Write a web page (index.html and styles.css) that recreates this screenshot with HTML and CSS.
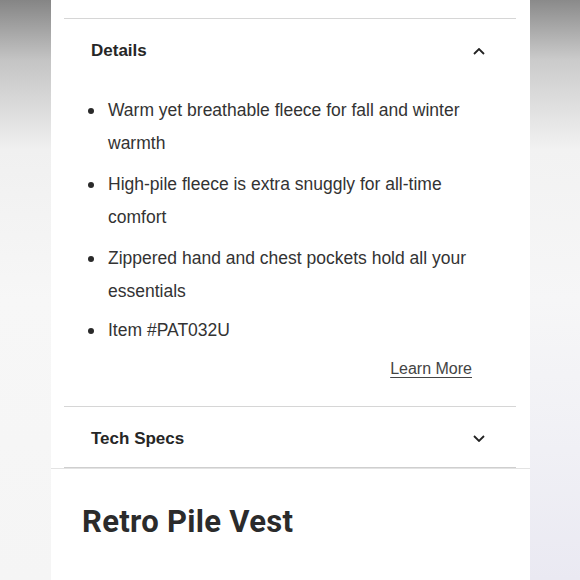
FILE: index.html
```html
<!DOCTYPE html>
<html lang="en">
<head>
<meta charset="utf-8">
<title>Retro Pile Vest</title>
<link rel="stylesheet" href="styles.css">
</head>
<body>
<div class="frame">
  <div class="side side-left"></div>
  <main class="panel">
    <div class="acc-wrap">
      <section class="accordion">
        <div class="acc-item">
          <div class="acc-head">
            <h2 class="acc-title">Details</h2>
            <svg class="chev" width="12" height="7" viewBox="0 0 12 7"><polyline points="1,6 6,1 11,6" fill="none" stroke="#222" stroke-width="1.8"/></svg>
          </div>
          <div class="acc-body">
            <ul class="bullets">
              <li>Warm yet breathable fleece for fall and winter warmth</li>
              <li>High-pile fleece is extra snuggly for all-time comfort</li>
              <li>Zippered hand and chest pockets hold all your essentials</li>
              <li class="last">Item #PAT032U</li>
            </ul>
            <div class="more"><a href="#" class="more-link">Learn More</a></div>
          </div>
        </div>
        <div class="acc-item">
          <div class="acc-head acc-head-closed">
            <h2 class="acc-title">Tech Specs</h2>
            <svg class="chev" width="12" height="7" viewBox="0 0 12 7"><polyline points="1,1 6,6 11,1" fill="none" stroke="#222" stroke-width="1.8"/></svg>
          </div>
        </div>
      </section>
    </div>
    <h1 class="title">Retro Pile Vest</h1>
  </main>
  <div class="side side-right"></div>
</div>
</body>
</html>
```

FILE: styles.css
```css
html, body {
  margin: 0;
  padding: 0;
}
body {
  width: 580px;
  height: 580px;
  overflow: hidden;
  font-family: "Liberation Sans", Arial, sans-serif;
  color: #2e2e2e;
}
.frame {
  display: flex;
  height: 580px;
}
.side {
  flex: none;
}
.side-left {
  width: 51px;
  background: linear-gradient(to bottom, #858585 0px, #c4c4c4 60px, #f0f0f0 150px, #f7f7f7 300px, #f5f5f5 580px);
}
.side-right {
  width: 50px;
  background: linear-gradient(to bottom, #8a8a8a 0px, #cbcbcb 60px, #f2f2f2 150px, #f6f6f7 300px, #f0f0f5 450px, #eae9f2 580px);
}
.panel {
  flex: none;
  width: 479px;
  background: #fff;
  padding-top: 18px;
  box-sizing: border-box;
}
.acc-wrap {
  padding: 0 5px 0 4px;
  border-bottom: 1px solid #e3e3e3;
}
.accordion {
  margin: 0 9px;
  border-bottom: 1px solid #cfcfcf;
}
.acc-item {
  border-top: 1px solid #d6d6d6;
}
.acc-head {
  height: 63px;
  box-sizing: border-box;
  padding: 1px 31px 0 27px;
  display: flex;
  align-items: center;
  justify-content: space-between;
}
.acc-head-closed {
  height: 60px;
  padding-top: 3px;
}
.acc-title {
  margin: 0;
  font-size: 17px;
  line-height: 20px;
  font-weight: 700;
  color: #262626;
}
.chev {
  display: block;
}
.acc-body {
  padding: 12px 44px 27px 24px;
}
.bullets {
  list-style: none;
  margin: 0;
  padding: 0;
}
.bullets li {
  display: flex;
  font-size: 17.5px;
  line-height: 33px;
  color: #333;
}
.bullets li + li {
  margin-top: 8px;
}
.bullets li.last {
  margin-top: 6px;
}
.bullets li::before {
  content: "";
  flex: none;
  width: 6px;
  height: 6px;
  border-radius: 50%;
  background: #2a2a2a;
  margin: 14px 14px 0 0;
}
.more {
  margin-top: 12px;
  text-align: right;
  font-size: 16px;
  line-height: 20px;
}
.more-link {
  color: #444;
  text-decoration: underline;
  text-underline-offset: 3px;
}
.title {
  margin: 33px 0 0 31px;
  font-family: Roboto, "Liberation Sans", sans-serif;
  font-size: 31px;
  line-height: 40px;
  font-weight: 700;
  letter-spacing: 0.3px;
  color: #2b2b2b;
}
```
